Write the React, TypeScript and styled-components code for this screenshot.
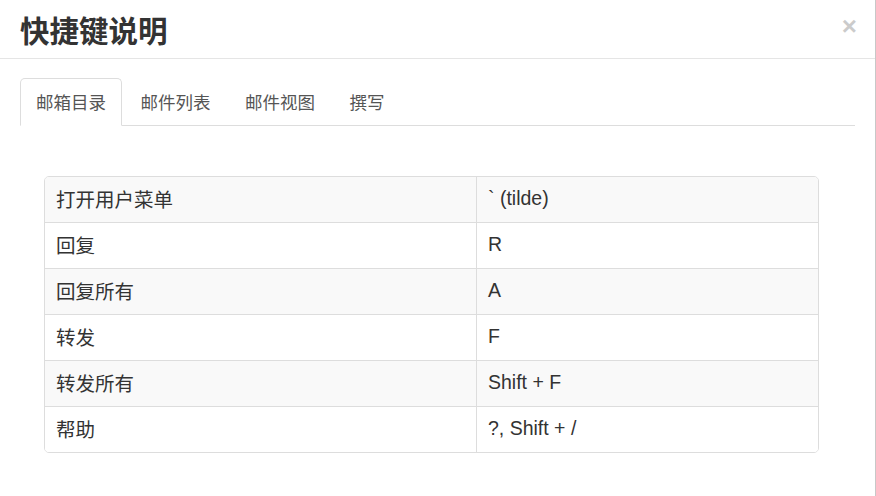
import React from 'react';
import styled, { createGlobalStyle } from 'styled-components';

const GlobalStyle = createGlobalStyle`
  html, body {
    margin: 0;
    padding: 0;
    background: #fff;
  }
  body {
    font-family: "Liberation Sans", "Noto Sans CJK SC", sans-serif;
    color: #333;
  }
`;

const Modal = styled.div`
  width: 876px;
  height: 496px;
  box-sizing: border-box;
  border-right: 1px solid #c8c8c8;
  background: #fff;
  overflow: hidden;
`;

const Header = styled.div`
  height: 58px;
  border-bottom: 1px solid #e5e5e5;
  display: flex;
  align-items: center;
  justify-content: space-between;
  padding: 0 18px 0 20px;
`;

const Title = styled.h3`
  margin: 0;
  font-family: "Noto Sans CJK SC", sans-serif;
  font-size: 29.5px;
  font-weight: 700;
  line-height: 1.1;
  color: #333;
`;

const Close = styled.button`
  border: 0;
  background: none;
  padding: 0;
  margin-top: -6px;
  font-family: "Liberation Sans", sans-serif;
  font-size: 26px;
  font-weight: 700;
  line-height: 1;
  color: #000;
  opacity: 0.2;
  cursor: pointer;
`;

const Body = styled.div`
  padding: 19px 20px 0 20px;
`;

const Tabs = styled.ul`
  display: flex;
  list-style: none;
  margin: 0;
  padding: 0;
  border-bottom: 1px solid #ddd;
`;

const Tab = styled.li<{ $active?: boolean }>`
  box-sizing: border-box;
  margin-right: 2.5px;
  margin-bottom: -1px;
  padding: 0 15px 2px;
  height: 48px;
  display: flex;
  align-items: center;
  font-family: "Noto Sans CJK SC", sans-serif;
  font-size: 17.5px;
  color: #555;
  border: 1px solid ${p => (p.$active ? '#ddd' : 'transparent')};
  border-bottom-color: ${p => (p.$active ? '#fff' : 'transparent')};
  border-radius: 5px 5px 0 0;
  background: ${p => (p.$active ? '#fff' : 'transparent')};
`;

const TabPane = styled.div`
  padding: 50px 0 0 24px;
`;

const Table = styled.div`
  width: 775px;
  border: 1px solid #ddd;
  border-radius: 5px;
  overflow: hidden;
  box-sizing: border-box;
`;

const Row = styled.div<{ $striped?: boolean }>`
  box-sizing: border-box;
  display: grid;
  grid-template-columns: 431px 1fr;
  height: 46px;
  background: ${p => (p.$striped ? '#f9f9f9' : '#fff')};
  &:first-child {
    height: 45px;
  }
  & + & {
    border-top: 1px solid #ddd;
  }
`;

const Cell = styled.div`
  display: flex;
  align-items: center;
  padding: 0 11px 2px;
  font-family: "Liberation Sans", "Noto Sans CJK SC", sans-serif;
  font-size: 19.5px;
  color: #333;
  & + & {
    border-left: 1px solid #ddd;
  }
`;

const CnCell = styled(Cell)`
  font-family: "Noto Sans CJK SC", sans-serif;
`;

const tabs = ['邮箱目录', '邮件列表', '邮件视图', '撰写'];

const shortcuts = [
  ['打开用户菜单', '` (tilde)'],
  ['回复', 'R'],
  ['回复所有', 'A'],
  ['转发', 'F'],
  ['转发所有', 'Shift + F'],
  ['帮助', '?, Shift + /'],
];

export default function App() {
  return (
    <>
      <GlobalStyle />
      <Modal>
        <Header>
          <Title>快捷键说明</Title>
          <Close aria-label="Close">×</Close>
        </Header>
        <Body>
          <Tabs>
            {tabs.map((t, i) => (
              <Tab key={t} $active={i === 0}>{t}</Tab>
            ))}
          </Tabs>
          <TabPane>
            <Table>
              {shortcuts.map(([action, key], i) => (
                <Row key={action} $striped={i % 2 === 0}>
                  <CnCell>{action}</CnCell>
                  <Cell>{key}</Cell>
                </Row>
              ))}
            </Table>
          </TabPane>
        </Body>
      </Modal>
    </>
  );
}
